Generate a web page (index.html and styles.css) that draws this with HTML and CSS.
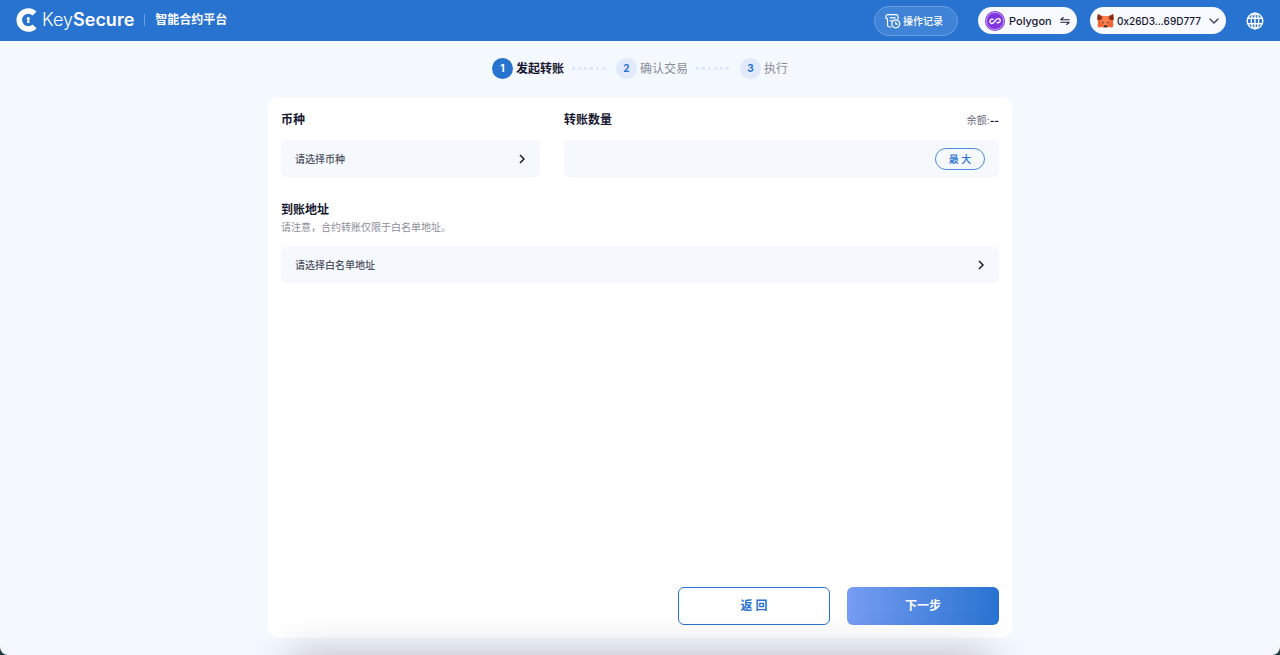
FILE: index.html
```html
<!DOCTYPE html>
<html lang="zh-CN">
<head>
<meta charset="utf-8">
<meta name="viewport" content="width=device-width, initial-scale=1">
<title>KeySecure 智能合约平台</title>
<link rel="stylesheet" href="styles.css">
</head>
<body>
<div class="app">
  <header class="topbar">
    <div class="brand">
      <svg class="brand-mark" viewBox="0 0 21 24" aria-hidden="true">
        <path d="M18.600 5.600A9 9 0 1 0 18.600 18.400" fill="none" stroke="#fff" stroke-width="5.600"/>
        <path d="M12.300 9a1.600 1.600 0 0 1 .8 3l.500 3h-2.600l.5-3a1.600 1.600 0 0 1 .8-3z" fill="#fff"/>
      </svg>
      <span class="brand-name">Key<b>Secure</b></span>
      <span class="brand-rule"></span>
      <span class="brand-title">智能合约平台</span>
    </div>
    <nav class="tools">
      <button class="pill pill-history" type="button">
        <svg class="icon-history" viewBox="0 0 16 16" fill="none" stroke="#fff" stroke-width="1.2" stroke-linecap="round" stroke-linejoin="round" aria-hidden="true">
          <path d="M6 14H4.500a2 2 0 0 1-2-2V5.500H1V3.400a1.800 1.800 0 0 1 1.800-1.800h8.400A1.800 1.800 0 0 1 13 3.400V5.800M5.200 4.800h5M5.200 7.800h1.600"/>
          <circle cx="10.800" cy="10.800" r="4"/>
          <path d="M10.800 9v2.100h1.700"/>
        </svg>
        <span>操作记录</span>
      </button>
      <button class="pill pill-network" type="button">
        <svg class="icon-coin" viewBox="0 0 20 20" fill="none" aria-hidden="true">
          <circle cx="10" cy="10" r="10" fill="#8035df"/>
          <circle cx="10" cy="10" r="8.600" stroke="#d8bcf8" stroke-width=".8"/>
          <path d="m8.600 8.700-1.700-.6-1.800 1.200-.2 2 1.500 1.200 1.800-.5 3.700-4 1.700-.5 1.600 1.200-.2 2-1.800 1.200-1.700-.6" stroke="#fff" stroke-width="1.300" stroke-linejoin="round"/>
        </svg>
        <span class="network-name">Polygon</span>
        <svg class="icon-swap" viewBox="0 0 10 10" fill="none" stroke="#20203c" stroke-width="1.100" stroke-linecap="round" stroke-linejoin="round" aria-hidden="true">
          <path d="M9.200 3.700H.8L3.300 1.500M.8 6.300h8.400L6.700 8.500"/>
        </svg>
      </button>
      <button class="pill pill-wallet" type="button">
        <svg class="icon-fox" viewBox="0 0 18 16" aria-hidden="true">
          <path d="M1 .5 6.500 3h5L17 .500l.8 5-1 4 .6 2.500-1.200 3.200-3.700-1-1.500 1.300H7l-1.500-1.300-3.700 1L.6 12l.6-2.500-1-4z" fill="#f5622b"/>
          <path d="M1 .500 5.500 3.700 4.300 6.500l-3.100.6-.9-1.600zM17 .500l-4.500 3.200 1.200 2.800 3.100.6.9-1.600z" fill="#80301f"/>
          <path d="m7 3-1 4-2.700 1 2.400 2.700L7 13h4l1.300-2.300L14.700 8 12 7l-1-4z" fill="#fa8150"/>
          <path d="m5 8.500 2.300.9-.6 1.500zM13 8.500l-2.300.9.6 1.500z" fill="#24333d"/>
          <path d="M7.600 12.500h2.800l.3 1.900H7.300z" fill="#24333d"/>
          <path d="m5.500 14.200 1.700.3h3.600l1.700-.3-1.500 1.300H7z" fill="#d6b8aa"/>
        </svg>
        <span>0x26D3...69D777</span>
        <svg class="icon-down" viewBox="0 0 10 6" fill="none" stroke="#3c4657" stroke-width="1.400" stroke-linecap="round" stroke-linejoin="round" aria-hidden="true"><path d="m1 1 4 4 4-4"/></svg>
      </button>
      <button class="language" type="button" aria-label="语言">
        <svg viewBox="0 0 18 18" fill="none" stroke="#fff" stroke-width="1.400" aria-hidden="true">
          <circle cx="9" cy="9" r="7.800"/><ellipse cx="9" cy="9" rx="3.700" ry="7.800"/>
          <path d="M9 1.200v15.600M1.900 6.200h14.200M1.900 11.800h14.200"/>
        </svg>
      </button>
    </nav>
  </header>

  <main class="content">
    <ol class="steps">
      <li class="step step-active"><span class="step-number">1</span><span>发起转账</span></li>
      <li class="step-dots" aria-hidden="true"><i></i><i></i><i></i><i></i><i></i><i></i></li>
      <li class="step"><span class="step-number">2</span><span>确认交易</span></li>
      <li class="step-dots" aria-hidden="true"><i></i><i></i><i></i><i></i><i></i><i></i></li>
      <li class="step"><span class="step-number">3</span><span>执行</span></li>
    </ol>

    <form class="card">
      <div class="transfer-row">
        <section>
          <div class="field-head"><h2 id="coin-label">币种</h2></div>
          <button class="picker" type="button" aria-describedby="coin-label">
            <span>请选择币种</span>
            <svg class="icon-next" viewBox="0 0 6 10" aria-hidden="true"><path d="m1 1 4 4-4 4"/></svg>
          </button>
        </section>
        <section>
          <div class="field-head"><h2><label for="amount">转账数量</label></h2><span class="balance">余额:<b>--</b></span></div>
          <div class="amount-box">
            <input id="amount" class="amount" type="text" inputmode="decimal">
            <button class="max" type="button">最 大</button>
          </div>
        </section>
      </div>
      <section class="address">
        <h2 id="address-label">到账地址</h2>
        <p class="hint">请注意，合约转账仅限于白名单地址。</p>
        <button class="picker" type="button" aria-describedby="address-label">
          <span>请选择白名单地址</span>
          <svg class="icon-next" viewBox="0 0 6 10" aria-hidden="true"><path d="m1 1 4 4-4 4"/></svg>
        </button>
      </section>
      <div class="actions">
        <button class="action action-back" type="button">返 回</button>
        <button class="action action-next" type="submit">下一步</button>
      </div>
    </form>
  </main>
  <div class="bottom-shade"></div>
</div>
</body>
</html>
```
FILE: styles.css
```css
* {
  box-sizing: border-box;
}

html {
  background: #1d3a3c;
}

body {
  margin: 0;
  color: #17172f;
  font-family: Inter, "Noto Sans CJK SC", sans-serif;
  font-size: 10px;
  line-height: 16px;
}

button,
input {
  margin: 0;
  border: 0;
  padding: 0;
  background: none;
  color: inherit;
  font: inherit;
}

button {
  cursor: pointer;
}

svg {
  display: block;
  flex: none;
}

h2 {
  margin: 0;
  font-size: 12px;
  font-weight: 700;
  line-height: 18px;
}

.app {
  position: relative;
  display: flex;
  flex-direction: column;
  min-height: 100vh;
  overflow: hidden;
  border-radius: 0 0 8px 8px;
  background: #f4f8ff;
}

.topbar {
  display: flex;
  align-items: center;
  justify-content: space-between;
  height: 41px;
  padding: 0 16px;
  background: #2873d0;
}

.brand {
  display: flex;
  align-items: center;
  padding-bottom: 2px;
  color: #fff;
}

.brand-mark {
  width: 21px;
  height: 24px;
}

.brand-name {
  margin-left: 5px;
  font-size: 18px;
  font-weight: 300;
}

.brand-name b {
  font-weight: 600;
}

.brand-rule {
  width: 1px;
  height: 12px;
  margin: 0 10px;
  background: #6a9fe0;
}

.brand-title {
  font-size: 12px;
  font-weight: 700;
}

.tools {
  display: flex;
  align-items: center;
}

.pill {
  display: flex;
  align-items: center;
  height: 27px;
  border-radius: 15px;
  background: #f7faff;
  font-size: 11px;
  font-weight: 500;
}

.pill-history {
  width: 84px;
  height: 30px;
  gap: 2px;
  margin-right: 20px;
  border: 1px solid #6a9fe0;
  padding-left: 10px;
  background: #3f83d6;
  color: #fff;
  font-size: 10px;
}

.icon-history {
  width: 16px;
  height: 16px;
}

.pill-network {
  width: 99px;
  margin-right: 13px;
  padding: 0 7px;
}

.icon-coin {
  width: 20px;
  height: 20px;
  margin-right: 4px;
}

.icon-swap {
  width: 10px;
  height: 10px;
  margin-left: auto;
}

.pill-wallet {
  width: 136px;
  margin-right: 20px;
  padding: 0 7px;
  font-size: 10px;
}

.icon-fox {
  width: 17px;
  height: 16px;
  margin-right: 3px;
}

.icon-down {
  width: 10px;
  height: 6px;
  margin-left: auto;
}

.language {
  width: 18px;
  height: 18px;
}

.content {
  display: flex;
  flex: 1;
  flex-direction: column;
  width: 100%;
  max-width: 744px;
  margin: 0 auto;
  padding: 17px 0;
}

.steps {
  display: flex;
  align-items: center;
  justify-content: center;
  margin: 0 0 18px;
  padding: 0;
  list-style: none;
}

.step {
  display: flex;
  align-items: center;
  gap: 3px;
  color: #8b8d98;
  font-size: 12px;
}

.step-number {
  width: 21px;
  height: 21px;
  border-radius: 50%;
  background: #e0eafa;
  color: #2873d0;
  font-size: 10px;
  font-weight: 700;
  line-height: 21px;
  text-align: center;
}

.step-active {
  color: #17172f;
  font-weight: 700;
}

.step-active .step-number {
  background: #2873d0;
  color: #fff;
}

.step-dots {
  display: flex;
  gap: 3px;
  margin: 0 11px 0 8px;
}

.step-dots i {
  width: 3px;
  height: 3px;
  background: #dde9fa;
}

.card {
  display: flex;
  flex: 1;
  flex-direction: column;
  border-radius: 10px;
  padding: 14px 13px 13px;
  background: #fff;
}

.transfer-row {
  display: grid;
  grid-template-columns: 259px 1fr;
  gap: 24px;
}

.field-head {
  display: flex;
  align-items: center;
  justify-content: space-between;
  margin-bottom: 11px;
}

.balance {
  color: #696b78;
}

.balance b {
  color: #17172f;
}

.picker,
.amount-box {
  display: flex;
  align-items: center;
  justify-content: space-between;
  width: 100%;
  height: 37px;
  border-radius: 6px;
  padding: 0 14px;
  background: #f5f9fe;
}

.picker {
  color: #4c4f5e;
  font-weight: 500;
}

.icon-next {
  width: 6px;
  height: 10px;
  margin-right: 1px;
  fill: none;
  stroke: #17172f;
  stroke-width: 1.5px;
}

.amount {
  flex: 1;
  min-width: 0;
  height: 24px;
  outline: 0;
}

.max {
  width: 50px;
  height: 22px;
  border: 1px solid #4d8ddb;
  border-radius: 11px;
  color: #2873d0;
  font-weight: 500;
}

.address {
  margin-top: 24px;
}

.hint {
  margin: 0 0 11px;
  color: #8b8d98;
}

.actions {
  display: flex;
  justify-content: flex-end;
  gap: 17px;
  margin-top: auto;
}

.action {
  width: 152px;
  height: 38px;
  border-radius: 6px;
  font-size: 12px;
  font-weight: 700;
}

.action-back {
  border: 1px solid #2873d0;
  color: #2873d0;
}

.action-next {
  background: linear-gradient(90deg, #779cf3, #2873d0);
  color: #fff;
}

.bottom-shade {
  position: absolute;
  top: 100%;
  right: 0;
  left: 0;
  width: 100%;
  max-width: 700px;
  height: 40px;
  margin: 0 auto;
  box-shadow: 0 0 40px rgba(0, 0, 0, 0.26);
  pointer-events: none;
}
```
